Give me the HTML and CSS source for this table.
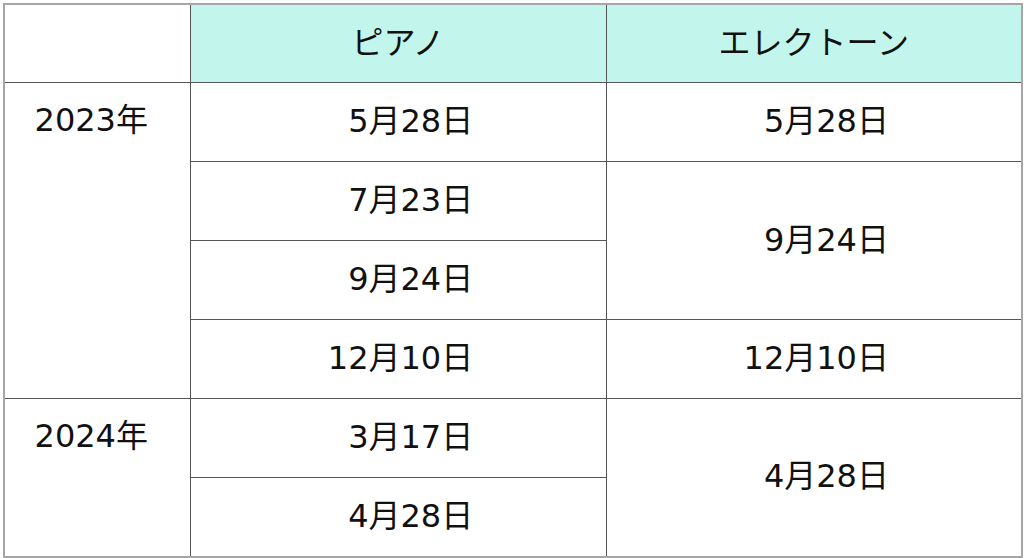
FILE: index.html
```html
<!DOCTYPE html>
<html lang="ja">
<head>
<meta charset="utf-8">
<title>日程</title>
<link rel="stylesheet" href="styles.css">
</head>
<body>
<table class="schedule">
  <colgroup>
    <col class="c-year">
    <col class="c-date">
    <col class="c-date">
  </colgroup>
  <thead>
    <tr>
      <th class="corner"></th>
      <th class="head">ピアノ</th>
      <th class="head">エレクトーン</th>
    </tr>
  </thead>
  <tbody>
    <tr>
      <td class="year" rowspan="4">2023年</td>
      <td class="date">&#8199;5月28日</td>
      <td class="date">&#8199;5月28日</td>
    </tr>
    <tr>
      <td class="date">&#8199;7月23日</td>
      <td class="date" rowspan="2">&#8199;9月24日</td>
    </tr>
    <tr>
      <td class="date">&#8199;9月24日</td>
    </tr>
    <tr>
      <td class="date">12月10日</td>
      <td class="date">12月10日</td>
    </tr>
    <tr>
      <td class="year" rowspan="2">2024年</td>
      <td class="date">&#8199;3月17日</td>
      <td class="date" rowspan="2">&#8199;4月28日</td>
    </tr>
    <tr>
      <td class="date">&#8199;4月28日</td>
    </tr>
  </tbody>
</table>
</body>
</html>
```

FILE: styles.css
```css
html, body {
  margin: 0;
  padding: 0;
  background: #ffffff;
}
body {
  padding: 3px 0 0 3px;
  font-family: "DejaVu Sans", "Noto Sans CJK JP", sans-serif;
  font-size: 32px;
  color: #111111;
}
.schedule {
  border-collapse: collapse;
  border: 2px solid #a6a6a6;
  width: 1018px;
  table-layout: fixed;
}
.c-year { width: 186px; }
.c-date { width: 416px; }
.schedule tr { height: 79px; }
.schedule thead tr { height: 78.6px; }
.schedule th,
.schedule td {
  border: 1px solid #555555;
  padding: 0 0 8px 0;
  font-weight: normal;
  text-align: center;
  vertical-align: middle;
  white-space: nowrap;
}
.schedule .head {
  background: #c2f6ec;
  padding-bottom: 7px;
}
.schedule .corner { background: #ffffff; }
.schedule .date {
  padding-left: 5px;
}
.schedule .year {
  vertical-align: top;
  padding-top: 11px;
  padding-right: 12px;
}
```
